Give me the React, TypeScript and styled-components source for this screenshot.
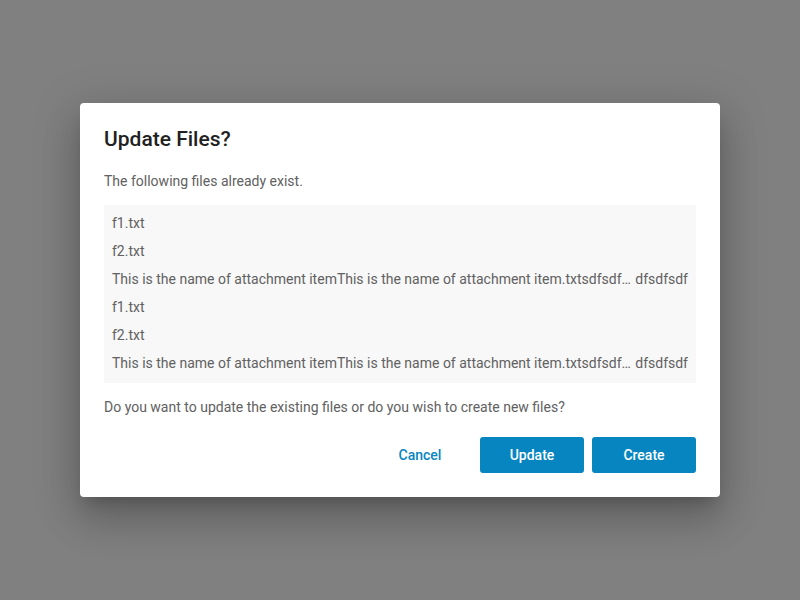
import styled, { createGlobalStyle } from "styled-components";

const GlobalStyle = createGlobalStyle`
  html, body {
    margin: 0;
    padding: 0;
    height: 100%;
  }
  body {
    font-family: Roboto, "Liberation Sans", sans-serif;
    -webkit-font-smoothing: antialiased;
  }
  #root {
    height: 100%;
  }
`;

const Backdrop = styled.div`
  width: 100%;
  height: 100vh;
  background-color: #808080;
  display: flex;
  justify-content: center;
  align-items: center;
`;

const Dialog = styled.div`
  width: 640px;
  box-sizing: border-box;
  padding: 24px;
  background-color: #ffffff;
  border-radius: 4px;
  box-shadow: 0 11px 15px -7px rgba(0, 0, 0, 0.2), 0 24px 38px 3px rgba(0, 0, 0, 0.14),
    0 9px 46px 8px rgba(0, 0, 0, 0.12);
  display: flex;
  flex-direction: column;
`;

const Title = styled.h2`
  margin: 0;
  font-size: 21px;
  font-weight: 500;
  line-height: 24px;
  color: #212121;
`;

const Text = styled.p`
  margin: 0;
  font-size: 14px;
  line-height: 20px;
  color: #616161;
`;

const Intro = styled(Text)`
  margin-top: 20px;
`;

const FileList = styled.ul`
  list-style: none;
  margin: 14px 0 0;
  padding: 4px 8px 6px;
  background-color: #f8f8f8;
`;

const FileRow = styled.li`
  display: flex;
  align-items: center;
  height: 28px;
  font-size: 14px;
  color: #616161;
  white-space: nowrap;
  min-width: 0;
`;

const NameStart = styled.span`
  overflow: hidden;
  text-overflow: ellipsis;
  min-width: 0;
`;

const NameEnd = styled.span`
  flex-shrink: 0;
  margin-left: 4px;
`;

const Question = styled(Text)`
  margin-top: 14px;
`;

const Actions = styled.div`
  display: flex;
  justify-content: flex-end;
  gap: 8px;
  margin-top: 20px;
`;

const Button = styled.button<{ $primary?: boolean }>`
  width: 104px;
  height: 36px;
  border: none;
  border-radius: 3px;
  font-family: inherit;
  font-size: 14px;
  font-weight: 500;
  cursor: pointer;
  background-color: ${props => (props.$primary ? "#0785c1" : "transparent")};
  color: ${props => (props.$primary ? "#ffffff" : "#0785c1")};
`;

const longName =
  "This is the name of attachment itemThis is the name of attachment item.txtsdfsdfsdfsdfsdfsdf";

const files = [
  { start: "f1.txt" },
  { start: "f2.txt" },
  { start: longName, end: "dfsdfsdf" },
  { start: "f1.txt" },
  { start: "f2.txt" },
  { start: longName, end: "dfsdfsdf" },
];

const App = () => {
  return (
    <>
      <GlobalStyle />
      <Backdrop>
        <Dialog>
          <Title>Update Files?</Title>
          <Intro>The following files already exist.</Intro>
          <FileList>
            {files.map((f, i) => (
              <FileRow key={i}>
                <NameStart>{f.start}</NameStart>
                {f.end && <NameEnd>{f.end}</NameEnd>}
              </FileRow>
            ))}
          </FileList>
          <Question>Do you want to update the existing files or do you wish to create new files?</Question>
          <Actions>
            <Button>Cancel</Button>
            <Button $primary>Update</Button>
            <Button $primary>Create</Button>
          </Actions>
        </Dialog>
      </Backdrop>
    </>
  );
};

export default App;
